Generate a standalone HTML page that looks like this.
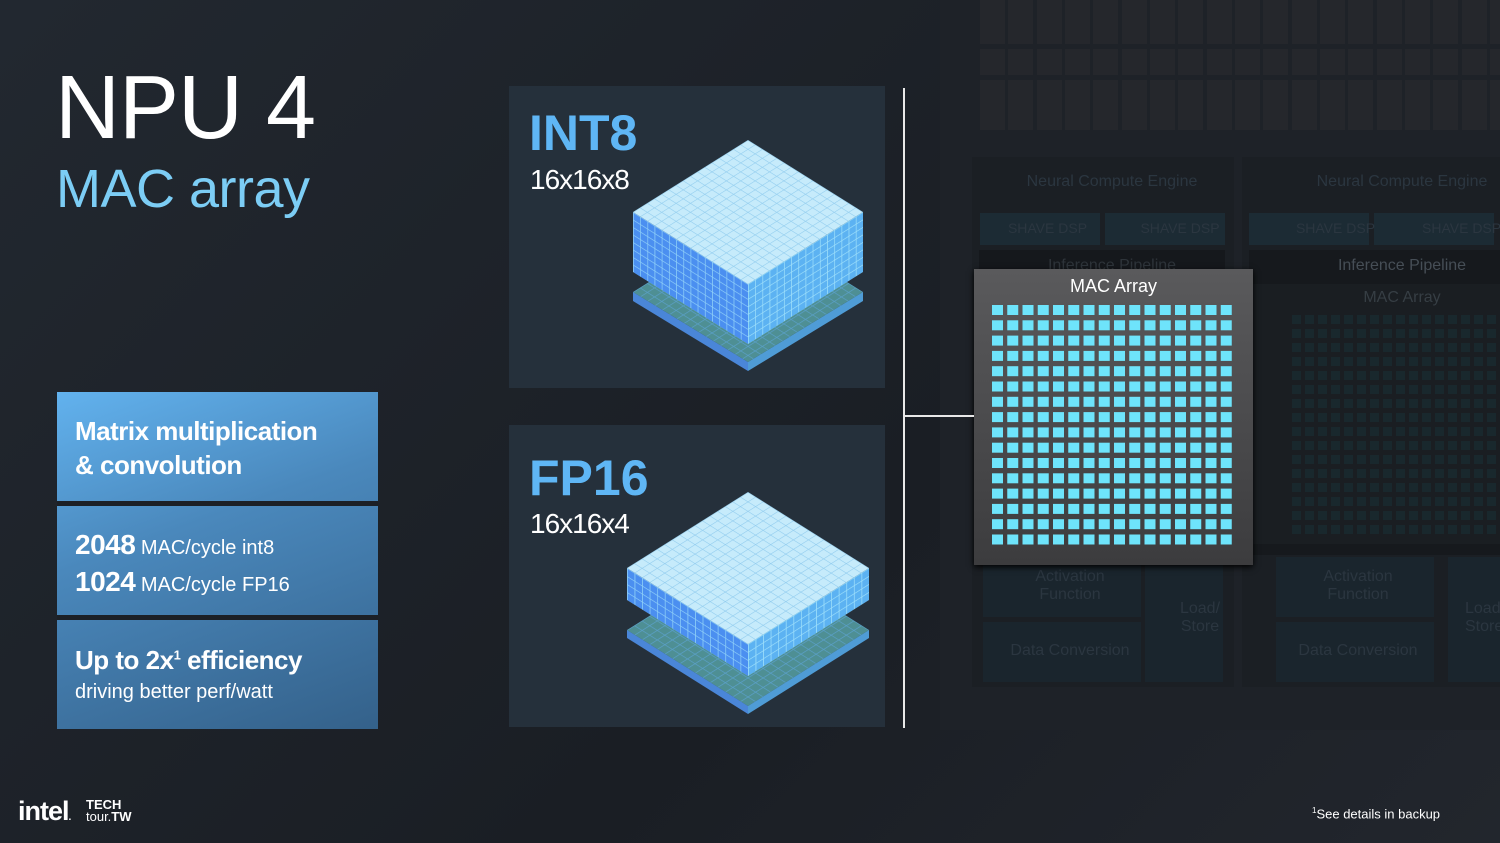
<!DOCTYPE html>
<html><head><meta charset="utf-8"><style>
*{margin:0;padding:0;box-sizing:border-box}
body{width:1500px;height:843px;overflow:hidden;background:#1c2026;font-family:"Liberation Sans",sans-serif;position:relative}
.a{position:absolute}
.t{color:#fff;position:absolute;white-space:nowrap}
.grey{color:#2b3640;font-size:16px;text-align:center;position:absolute}
</style></head><body>
<div class="a" style="left:0;top:0;width:1500px;height:843px;background:linear-gradient(135deg,#222830 0%,#1a1e24 60%,#22262d 100%)"></div>
<div class="a" style="left:940px;top:0;width:560px;height:730px;background:#1e2228"></div>
<svg class="a" style="left:940px;top:0" width="560" height="730">
<g fill="#25272c">
<g id="col"><rect x="40" y="0" width="25" height="44"/><rect x="40" y="49" width="25" height="26"/><rect x="40" y="80" width="25" height="50"/></g>
<use href="#col" x="28"/><use href="#col" x="57"/><use href="#col" x="85"/><use href="#col" x="113"/><use href="#col" x="142"/><use href="#col" x="170"/><use href="#col" x="198"/><use href="#col" x="227"/><use href="#col" x="255"/><use href="#col" x="283"/><use href="#col" x="312"/><use href="#col" x="340"/><use href="#col" x="368"/><use href="#col" x="397"/><use href="#col" x="425"/><use href="#col" x="453"/><use href="#col" x="482"/><use href="#col" x="510"/>
</g>
<rect x="32" y="157" width="262" height="530" fill="#1b1f24"/>
<rect x="302" y="157" width="262" height="530" fill="#1b1f24"/>
<g fill="#1c2b34"><rect x="40" y="213" width="120" height="32"/><rect x="165" y="213" width="120" height="32"/><rect x="309" y="213" width="120" height="32"/><rect x="434" y="213" width="120" height="32"/></g>
<rect x="39" y="250" width="246" height="30" fill="#15181c"/>
<rect x="309" y="250" width="260" height="305" fill="#16191d"/>
<rect x="313" y="284" width="260" height="260" fill="#1a1e22"/>
<g fill="#19282d">
<g id="dr"><rect x="352" y="315" width="9" height="9"/><rect x="365" y="315" width="9" height="9"/><rect x="378" y="315" width="9" height="9"/><rect x="391" y="315" width="9" height="9"/><rect x="404" y="315" width="9" height="9"/><rect x="417" y="315" width="9" height="9"/><rect x="430" y="315" width="9" height="9"/><rect x="443" y="315" width="9" height="9"/><rect x="456" y="315" width="9" height="9"/><rect x="469" y="315" width="9" height="9"/><rect x="482" y="315" width="9" height="9"/><rect x="495" y="315" width="9" height="9"/><rect x="508" y="315" width="9" height="9"/><rect x="521" y="315" width="9" height="9"/><rect x="534" y="315" width="9" height="9"/><rect x="547" y="315" width="9" height="9"/></g>
<use href="#dr" y="14"/><use href="#dr" y="28"/><use href="#dr" y="42"/><use href="#dr" y="56"/><use href="#dr" y="70"/><use href="#dr" y="84"/><use href="#dr" y="98"/><use href="#dr" y="112"/><use href="#dr" y="126"/><use href="#dr" y="140"/><use href="#dr" y="154"/><use href="#dr" y="168"/><use href="#dr" y="182"/><use href="#dr" y="196"/><use href="#dr" y="210"/>
</g>
<g fill="#1a252d"><rect x="43" y="565" width="158" height="52"/><rect x="43" y="622" width="158" height="60"/><rect x="205" y="565" width="78" height="117"/><rect x="336" y="557" width="158" height="60"/><rect x="336" y="622" width="158" height="60"/><rect x="508" y="557" width="60" height="125"/></g>
</svg>
<div class="grey" style="left:972px;top:173px;width:280px">Neural Compute Engine</div>
<div class="grey" style="left:1262px;top:173px;width:280px">Neural Compute Engine</div>
<div class="grey" style="left:980px;top:220px;width:135px;font-size:14px">SHAVE DSP</div>
<div class="grey" style="left:1110px;top:220px;width:140px;font-size:14px">SHAVE DSP</div>
<div class="grey" style="left:1268px;top:220px;width:135px;font-size:14px">SHAVE DSP</div>
<div class="grey" style="left:1422px;top:220px;width:100px;font-size:14px;text-align:left">SHAVE DSP</div>
<div class="grey" style="left:972px;top:257px;width:280px;color:#2e343a">Inference Pipeline</div>
<div class="grey" style="left:1262px;top:257px;width:280px;color:#464e56">Inference Pipeline</div>
<div class="grey" style="left:1262px;top:289px;width:280px;color:#363e44">MAC Array</div>
<div class="grey" style="left:990px;top:568px;width:160px">Activation<br>Function</div>
<div class="grey" style="left:990px;top:642px;width:160px">Data Conversion</div>
<div class="grey" style="left:1150px;top:600px;width:100px">Load/<br>Store</div>
<div class="grey" style="left:1278px;top:568px;width:160px">Activation<br>Function</div>
<div class="grey" style="left:1278px;top:642px;width:160px">Data Conversion</div>
<div class="grey" style="left:1465px;top:600px;width:60px;text-align:left">Load/<br>Store</div>
<div class="a" style="left:974px;top:269px;width:279px;height:296px;background:linear-gradient(180deg,#5a5a5c,#3c3c3e);box-shadow:0 2px 6px #000"></div>
<div class="t" style="left:974px;top:276px;width:279px;text-align:center;font-size:18px">MAC Array</div>
<svg class="a" style="left:992px;top:305px" width="245" height="245"><g fill="#6ee4fb">
<g id="mr"><rect x="0" y="0" width="11" height="10"/><rect x="15.25" y="0" width="11" height="10"/><rect x="30.5" y="0" width="11" height="10"/><rect x="45.75" y="0" width="11" height="10"/><rect x="61" y="0" width="11" height="10"/><rect x="76.25" y="0" width="11" height="10"/><rect x="91.5" y="0" width="11" height="10"/><rect x="106.75" y="0" width="11" height="10"/><rect x="122" y="0" width="11" height="10"/><rect x="137.25" y="0" width="11" height="10"/><rect x="152.5" y="0" width="11" height="10"/><rect x="167.75" y="0" width="11" height="10"/><rect x="183" y="0" width="11" height="10"/><rect x="198.25" y="0" width="11" height="10"/><rect x="213.5" y="0" width="11" height="10"/><rect x="228.75" y="0" width="11" height="10"/></g>
<use href="#mr" y="15.3"/><use href="#mr" y="30.6"/><use href="#mr" y="45.9"/><use href="#mr" y="61.2"/><use href="#mr" y="76.5"/><use href="#mr" y="91.8"/><use href="#mr" y="107.1"/><use href="#mr" y="122.4"/><use href="#mr" y="137.7"/><use href="#mr" y="153"/><use href="#mr" y="168.3"/><use href="#mr" y="183.6"/><use href="#mr" y="198.9"/><use href="#mr" y="214.2"/><use href="#mr" y="229.5"/>
</g></svg>
<div class="a" style="left:903px;top:88px;width:2px;height:640px;background:#e8e8e8"></div>
<div class="a" style="left:904px;top:415px;width:70px;height:2px;background:#e8e8e8"></div>
<div class="t" style="left:55px;top:57px;font-size:90px;letter-spacing:-1px">NPU 4</div>
<div class="t" style="left:56px;top:158px;font-size:54px;color:#7ccdf5;letter-spacing:-0.5px">MAC array</div>
<div class="a" style="left:57px;top:392px;width:321px;height:337px;background:linear-gradient(160deg,#62b2ee 0%,#4a88bc 40%,#34618a 100%)"></div>
<div class="a" style="left:57px;top:501px;width:321px;height:5px;background:#1c2026"></div>
<div class="a" style="left:57px;top:615px;width:321px;height:5px;background:#1c2026"></div>
<div class="t" style="left:75px;top:414px;font-size:26px;font-weight:bold;line-height:34px;letter-spacing:-0.5px">Matrix multiplication<br>&amp; convolution</div>
<div class="t" style="left:75px;top:528px;font-size:20px;line-height:33px"><b style="font-size:28px;letter-spacing:-0.5px">2048</b> MAC/cycle int8<br><b style="font-size:28px;letter-spacing:-0.5px">1024</b> MAC/cycle FP16</div>
<div class="t" style="left:75px;top:645px;font-size:26px;font-weight:bold;letter-spacing:-0.5px">Up to 2x<sup style="font-size:13px">1</sup> efficiency</div>
<div class="t" style="left:75px;top:681px;font-size:20px">driving better perf/watt</div>
<div class="a" style="left:509px;top:86px;width:376px;height:302px;background:#25303b"></div>
<div class="a" style="left:509px;top:425px;width:376px;height:302px;background:#25303b"></div>
<div class="t" style="left:529px;top:104px;font-size:50px;font-weight:bold;color:#5fb6f5">INT8</div>
<div class="t" style="left:530px;top:164px;font-size:28px;letter-spacing:-1px">16x16x8</div>
<div class="t" style="left:529px;top:449px;font-size:50px;font-weight:bold;color:#5fb6f5">FP16</div>
<div class="t" style="left:530px;top:508px;font-size:28px;letter-spacing:-1px">16x16x4</div>
<svg class="a" style="left:0;top:0" width="900" height="740">
<defs>
<pattern id="pt" width="1" height="1" patternUnits="userSpaceOnUse"><rect width="1" height="1" fill="#c6ebfb"/><path d="M0 0H1M0 0V1" stroke="#8fcbee" stroke-width="0.14"/></pattern>
<pattern id="pl" width="1" height="1" patternUnits="userSpaceOnUse"><rect width="1" height="1" fill="#4b8ff0"/><path d="M0 0H1M0 0V1" stroke="#8fd0f8" stroke-width="0.2"/></pattern>
<pattern id="pr" width="1" height="1" patternUnits="userSpaceOnUse"><rect width="1" height="1" fill="#5cb2f2"/><path d="M0 0H1M0 0V1" stroke="#9ee0fb" stroke-width="0.2"/></pattern>
<pattern id="pg" width="1" height="1" patternUnits="userSpaceOnUse"><rect width="1" height="1" fill="#4e8f94"/><path d="M0 0H1M0 0V1" stroke="#5aa0c8" stroke-width="0.18"/></pattern>
<pattern id="a1" href="#pg" patternTransform="matrix(7.1875 4.5 -7.1875 4.5 748 220)"/>
<pattern id="a2" href="#pl" patternTransform="matrix(7.1875 4.5 0 7.5 633 212)"/>
<pattern id="a3" href="#pr" patternTransform="matrix(7.1875 -4.5 0 7.5 748 284)"/>
<pattern id="a4" href="#pt" patternTransform="matrix(7.1875 4.5 -7.1875 4.5 748 140)"/>
<pattern id="b1" href="#pg" patternTransform="matrix(7.5625 4.75 -7.5625 4.75 748 554)"/>
<pattern id="b2" href="#pl" patternTransform="matrix(7.5625 4.75 0 8 627 568)"/>
<pattern id="b3" href="#pr" patternTransform="matrix(7.5625 -4.75 0 8 748 644)"/>
<pattern id="b4" href="#pt" patternTransform="matrix(7.5625 4.75 -7.5625 4.75 748 492)"/>
</defs>
<polygon points="633,292 748,362 748,371 633,301" fill="#4a86d8"/>
<polygon points="748,362 863,292 863,301 748,371" fill="#4f9cd6"/>
<polygon points="748,220 863,292 748,362 633,292" fill="url(#a1)"/>
<polygon points="633,212 748,284 748,344 633,272" fill="url(#a2)"/>
<polygon points="748,284 863,212 863,272 748,344" fill="url(#a3)"/>
<polygon points="748,140 863,212 748,284 633,212" fill="url(#a4)"/>
<polygon points="627,630 748,706 748,714 627,638" fill="#4a86d8"/>
<polygon points="748,706 869,630 869,638 748,714" fill="#4f9cd6"/>
<polygon points="748,554 869,630 748,706 627,630" fill="url(#b1)"/>
<polygon points="627,568 748,644 748,676 627,600" fill="url(#b2)"/>
<polygon points="748,644 869,568 869,600 748,676" fill="url(#b3)"/>
<polygon points="748,492 869,568 748,644 627,568" fill="url(#b4)"/>
</svg>
<div class="t" style="left:18px;top:796px;font-size:27px;font-weight:bold;letter-spacing:-1px">intel<span style="font-size:10px">.</span></div>
<div class="t" style="left:86px;top:799px;font-size:13px;font-weight:bold;line-height:12px">TECH<br><span style="font-weight:normal">tour.</span>TW</div>
<div class="t" style="left:1312px;top:806px;font-size:13px"><sup style="font-size:8px">1</sup>See details in backup</div>
</body></html>
